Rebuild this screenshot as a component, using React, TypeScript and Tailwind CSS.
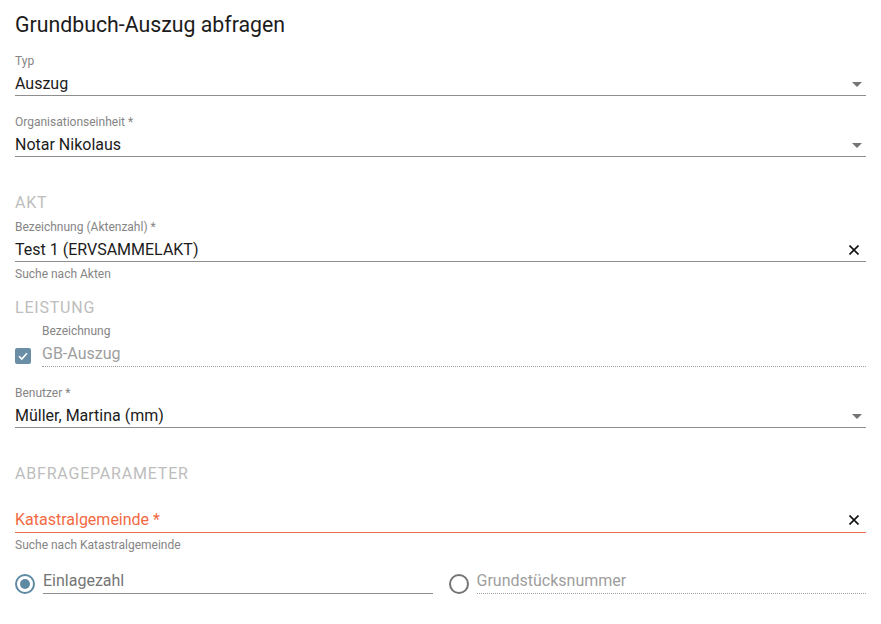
import React from "react";

const Caret = () => (
  <svg width="10" height="5" viewBox="0 0 10 5" className="shrink-0">
    <path d="M0 0 L10 0 L5 5 Z" fill="#757575" />
  </svg>
);

const Clear = () => (
  <svg width="10" height="10" viewBox="0 0 10 10" className="shrink-0">
    <path d="M0.5 0.5 L9.5 9.5 M9.5 0.5 L0.5 9.5" stroke="#111" strokeWidth="1.6" />
  </svg>
);

function Label({ children, className = "" }: { children: React.ReactNode; className?: string }) {
  return <div className={`text-[12px] leading-[14px] text-[#858585] ${className}`}>{children}</div>;
}

function Field({
  label,
  value,
  icon,
  iconMr = "mr-[4px]",
  className = "",
}: {
  label: string;
  value: string;
  icon: React.ReactNode;
  iconMr?: string;
  className?: string;
}) {
  return (
    <div className={className}>
      <Label>{label}</Label>
      <div className="flex items-center justify-between pt-[6px] pb-[1px] border-b border-[#8e8e8e]">
        <span className="text-[16px] leading-[20px] text-[#1c1c1c]">{value}</span>
        <span className={`${iconMr} flex items-center`}>{icon}</span>
      </div>
    </div>
  );
}

function Section({ children, className = "" }: { children: React.ReactNode; className?: string }) {
  return (
    <div className={`text-[16px] leading-[20px] text-[#bdbdbd] tracking-[0.8px] ${className}`}>{children}</div>
  );
}

export default function App() {
  return (
    <div
      className="w-[881px] h-[624px] bg-white px-[15px] pt-[11px] overflow-hidden"
      style={{ fontFamily: "Roboto, 'Noto Sans', sans-serif" }}
    >
      <h1 className="text-[21.3px] leading-[28px] text-[#1c1c1c] font-normal">Grundbuch-Auszug abfragen</h1>

      <Field className="mt-[15px]" label="Typ" value="Auszug" icon={<Caret />} />
      <Field className="mt-[19px]" label="Organisationseinheit *" value="Notar Nikolaus" icon={<Caret />} />

      <Section className="mt-[36px]">AKT</Section>
      <Field
        className="mt-[7px]"
        label="Bezeichnung (Aktenzahl) *"
        value="Test 1 (ERVSAMMELAKT)"
        icon={<Clear />}
        iconMr="mr-[7px]"
      />
      <Label className="mt-[5px]">Suche nach Akten</Label>

      <Section className="mt-[17px]">LEISTUNG</Section>
      <div className="mt-[6px] flex">
        <div className="w-[27px] shrink-0 flex flex-col justify-end pb-[3px]">
          <div className="w-[16px] h-[16px] rounded-[2px] bg-[#6a8ea5] flex items-center justify-center">
            <svg width="12" height="12" viewBox="0 0 12 12">
              <path d="M2 6.2 L4.8 9 L10 3.2" stroke="white" strokeWidth="1.6" fill="none" />
            </svg>
          </div>
        </div>
        <div className="flex-1">
          <Label>Bezeichnung</Label>
          <div className="pt-[4px] pb-[0px] border-b border-dotted border-[#9e9e9e]">
            <span className="text-[16px] leading-[20px] text-[#9e9e9e]">GB-Auszug</span>
          </div>
        </div>
      </div>

      <Field className="mt-[19px]" label="Benutzer *" value="Müller, Martina (mm)" icon={<Caret />} />

      <Section className="mt-[36px]">ABFRAGEPARAMETER</Section>

      <div className="mt-[26px] flex items-center justify-between pb-[2px] border-b border-[#f0714d]">
        <span className="text-[16px] leading-[20px] text-[#f26a43]">Katastralgemeinde *</span>
        <span className="mr-[7px] flex items-center">
          <Clear />
        </span>
      </div>
      <Label className="mt-[5px]">Suche nach Katastralgemeinde</Label>

      <div className="mt-[17px] grid grid-cols-2 gap-[16px]">
        <div className="flex items-end">
          <div className="w-[28px] shrink-0 pb-[0px]">
            <div className="w-[20px] h-[20px] rounded-full border-[2px] border-[#5f8aa3] flex items-center justify-center">
              <div className="w-[10px] h-[10px] rounded-full bg-[#5f8aa3]" />
            </div>
          </div>
          <div className="flex-1 pb-[0px] border-b border-[#8e8e8e]">
            <span className="text-[16px] leading-[18px] text-[#757575]">Einlagezahl</span>
          </div>
        </div>
        <div className="flex items-end">
          <div className="w-[28px] shrink-0 pb-[0px]">
            <div className="w-[20px] h-[20px] rounded-full border-[2px] border-[#757575]" />
          </div>
          <div className="flex-1 pb-[0px] border-b border-dotted border-[#9e9e9e]">
            <span className="text-[16px] leading-[18px] text-[#9e9e9e]">Grundstücksnummer</span>
          </div>
        </div>
      </div>
    </div>
  );
}
